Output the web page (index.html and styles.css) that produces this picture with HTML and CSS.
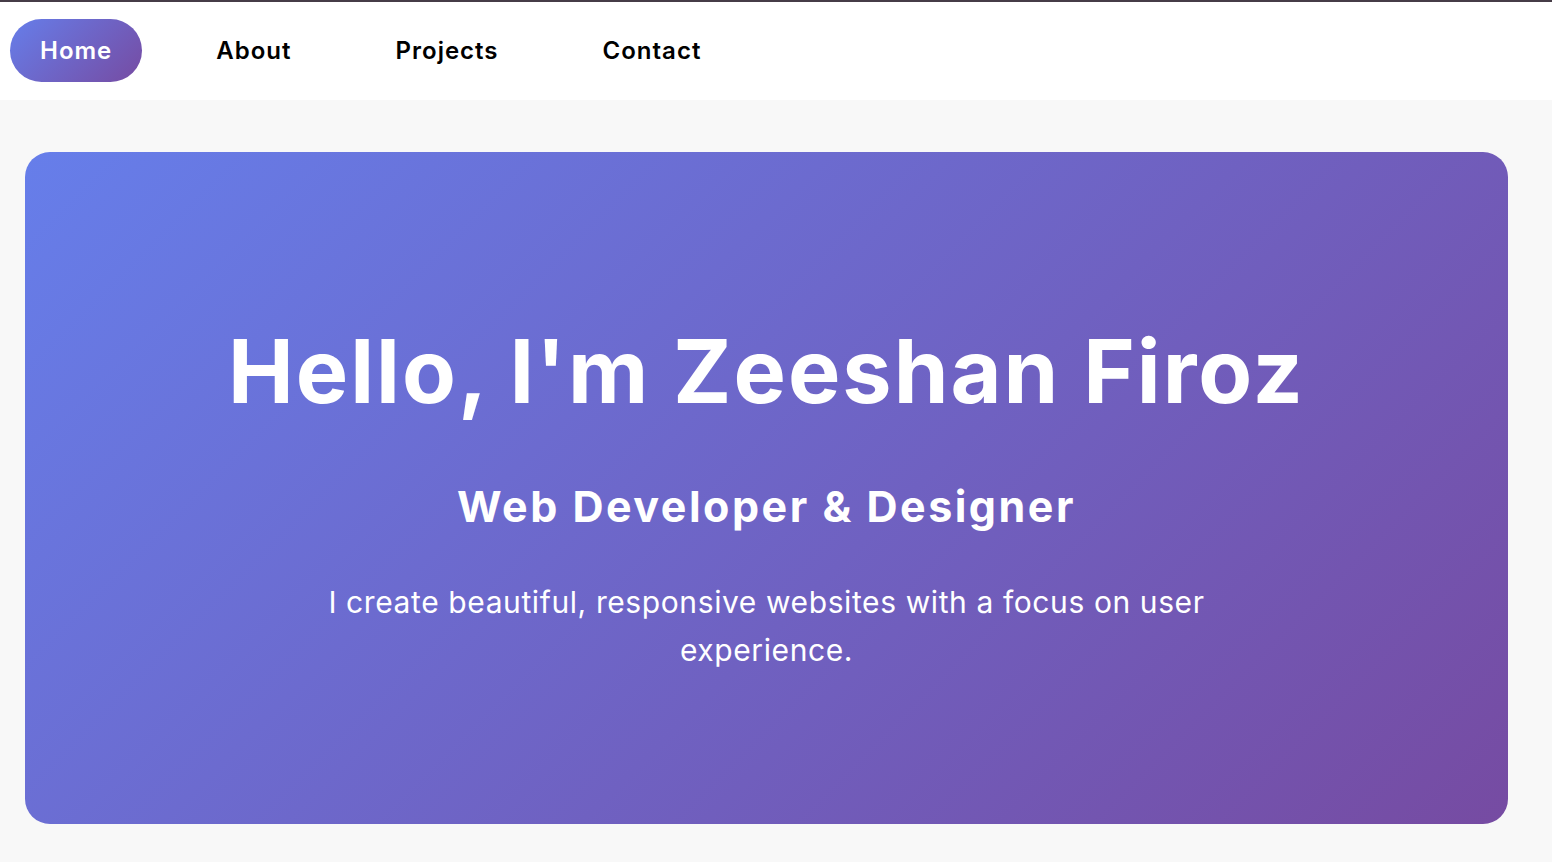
FILE: index.html
```html
<!DOCTYPE html>
<html lang="en">
<head>
<meta charset="utf-8">
<title>Zeeshan Firoz</title>
<link rel="stylesheet" href="styles.css">
</head>
<body>
<nav class="nav">
  <a class="nav-link active" href="#">Home</a>
  <a class="nav-link" href="#">About</a>
  <a class="nav-link" href="#">Projects</a>
  <a class="nav-link" href="#">Contact</a>
</nav>
<main class="main">
  <section class="hero">
    <h1 class="hero-title">Hello, I'm Zeeshan Firoz</h1>
    <h2 class="hero-sub">Web Developer &amp; Designer</h2>
    <p class="hero-text">I create beautiful, responsive websites with a focus on user experience.</p>
  </section>
</main>
</body>
</html>
```

FILE: styles.css
```css
* { box-sizing: border-box; }
html, body { margin: 0; padding: 0; }
body {
  background: #f8f8f8;
  font-family: Inter, "Noto Sans", sans-serif;
  border-top: 2px solid #463c47;
  height: 862px;
  overflow: hidden;
}
.nav {
  background: #ffffff;
  height: 98px;
  display: flex;
  align-items: center;
  gap: 44px;
  padding: 0 0 2px 10px;
}
.nav-link {
  display: flex;
  align-items: center;
  justify-content: center;
  height: 63px;
  padding: 0 30px;
  border-radius: 32px;
  color: #000;
  text-decoration: none;
  font-weight: 600;
  font-size: 24px;
  letter-spacing: 1px;
}
.nav-link.active {
  background: linear-gradient(135deg, #667eea 0%, #764ba2 100%);
  color: #fff;
}
.main {
  padding: 52px 44px 0 25px;
}
.hero {
  height: 672px;
  padding-top: 17px;
  border-radius: 25px;
  background: linear-gradient(135deg, #667eea 0%, #764ba2 100%);
  color: #fff;
  display: flex;
  flex-direction: column;
  align-items: center;
  justify-content: center;
  text-align: center;
}
.hero-title {
  margin: 0;
  font-size: 88px;
  font-weight: 700;
  line-height: 1.2;
  letter-spacing: 2px;
}
.hero-sub {
  margin: 56px 0 0;
  font-size: 43px;
  font-weight: 700;
  line-height: 1.2;
  letter-spacing: 2.5px;
}
.hero-text {
  margin: 45px 0 0;
  max-width: 900px;
  font-size: 30px;
  line-height: 48px;
  font-weight: 400;
  letter-spacing: 0.6px;
}
```
